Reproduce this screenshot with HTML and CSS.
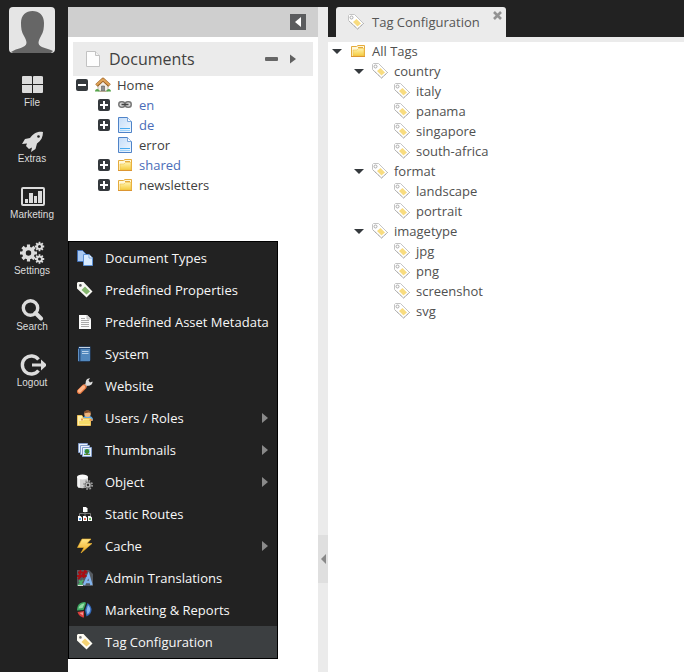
FILE: index.html
```html
<!DOCTYPE html>
<html lang="en">
<head>
<meta charset="utf-8">
<title>Tag Configuration</title>
<link rel="stylesheet" href="styles.css">
</head>
<body>
<svg class="sprite" aria-hidden="true">
  <defs>
    <linearGradient id="blue-page" x1="0" y1="0" x2="1" y2="1"><stop offset="0" stop-color="#c3dcf8"/><stop offset="1" stop-color="#f2f9ff"/></linearGradient>
    <linearGradient id="gold" x1="0" y1="0" x2="0" y2="1"><stop offset="0" stop-color="#fff3ae"/><stop offset="1" stop-color="#f5cb3e"/></linearGradient>
    <linearGradient id="bolt-fill" x1="0" y1="0" x2="0" y2="1"><stop offset="0" stop-color="#ffe68a"/><stop offset="1" stop-color="#f0a81c"/></linearGradient>
  </defs>
  <symbol id="tag" viewBox="0 0 16 16">
    <path d="M.5 1.500 1.500.500H6.500L15.500 9.500 9.500 15 .500 6.500Z" fill="#fff" stroke="#c4c4c4"/>
    <path d="M15.500 9.500 9.500 15 1 7" fill="none" stroke="#999" stroke-dasharray="1 1"/>
    <circle cx="3.500" cy="3.500" r="1.500" fill="#fff" stroke="#aaa"/>
    <path d="M8.500 5 13 9.500 9.500 12.500 5 8Z" fill="#f8dc80"/>
  </symbol>
  <symbol id="folder" viewBox="0 0 16 16">
    <path d="M1.500 13.500V3.500H6.500L8 2.500H14.500V13.500Z" fill="#fff8d8" stroke="#e5ab3c"/>
    <path d="M3 13V7H7L8.500 5.500H14V13Z" fill="url(#gold)" stroke="#efc14a" stroke-width=".6"/>
    <path d="M8 4.500H13" stroke="#e5ab3c"/>
    <path d="M1 13.500H15" stroke="#dc9632"/>
  </symbol>
  <symbol id="bluepage" viewBox="0 0 16 16">
    <path d="M1.500.500H10.500L14.500 4.500V15.500H1.500Z" fill="url(#blue-page)" stroke="#4f83c8"/>
    <path d="M10.500.500V4.500H14.500" fill="#fff" stroke="#77a6dd"/>
    <path d="M3 11.500H13" stroke="#48abf0"/><path d="M3 13.500H13" stroke="#9cd2fb"/>
  </symbol>
  <symbol id="page" viewBox="0 0 16 16">
    <path d="M1.500.500H10.500L14.500 4.500V15.500H1.500Z" fill="#fdfdfd" stroke="#c2c2c2"/>
    <path d="M10.500.500V4.500H14.500" fill="#f1f1f1" stroke="#c2c2c2"/>
  </symbol>
  <symbol id="home" viewBox="0 0 16 16">
    <path d="M3 7 8 3 13 7V14H3Z" fill="#f2eee6" stroke="#a89f90" stroke-width=".7"/>
    <path d="M6.500 14V9H9.500V14Z" fill="#8e8e8e" stroke="#5c5c5c" stroke-width=".6"/>
    <path d="M1.500 8.500 8 2.500 14.500 8.500" fill="none" stroke="#955b1f" stroke-width="3.600" stroke-linejoin="round"/>
    <path d="M1.500 8 8 2.300 14.500 8" fill="none" stroke="#dda257" stroke-width="2.200" stroke-linejoin="round"/>
    <path d="M0 14.500C0 11 4 11 5 14.500ZM11 14.500C12 11 16 11 16 14.500Z" fill="#55a34a"/>
    <path d="M5 14.500H11" stroke="#b9aa93"/>
  </symbol>
  <symbol id="link" viewBox="0 0 16 16">
    <g fill="#d8d8d8" stroke="#777" stroke-width="1.500"><rect x="1.800" y="4.700" width="6" height="5.600" rx="2.500"/><rect x="8.200" y="4.700" width="6" height="5.600" rx="2.500"/></g>
    <path d="M4.500 7.500H11.500" stroke="#444" stroke-width="1.500"/>
  </symbol>
  <symbol id="doctypes" viewBox="0 0 16 16">
    <path d="M.5.500H5.500L8.500 3.500V11.500H.5Z" fill="#a9c9f2" stroke="#416fb5"/>
    <path d="M6.500 4.500H12L15.500 8V15.500H6.500Z" fill="#d8ebff" stroke="#5c90d4"/>
    <path d="M12 4.500V8H15.500" fill="#fff" stroke="#7aa9e2"/>
  </symbol>
  <symbol id="greentag" viewBox="0 0 16 16">
    <path d="M0 1 1 0H6.500L15.500 9.500 9.500 15.500 0 6.500Z" fill="#f7f7f3"/>
    <circle cx="3.400" cy="3.400" r="1.300" fill="#555"/><path d="M8 4.500 13 9.500 9.500 12.500 4.500 8Z" fill="#84b66d"/>
  </symbol>
  <symbol id="goldtag" viewBox="0 0 16 16">
    <path d="M0 1 1 0H6.500L15.500 9.500 9.500 15.500 0 6.500Z" fill="#fffdf4"/>
    <circle cx="3.400" cy="3.400" r="1.300" fill="#777"/><path d="M8 4.500 13 9.500 9.500 12.500 4.500 8Z" fill="#f5d374"/>
  </symbol>
  <symbol id="textpage" viewBox="0 0 16 16">
    <path d="M2 1H10L14 5V15H2Z" fill="#fafafa"/><path d="M10 1V5H14" fill="#ddd" stroke="#aaa" stroke-width=".7"/>
    <path d="M4 4.500H8M4 6.500H12M4 8.500H12M4 10.500H12M4 12.500H12" stroke="#aaa"/>
  </symbol>
  <symbol id="book" viewBox="0 0 16 16">
    <path d="M1 2 2 .500H13.500V14L12.500 15.500H1Z" fill="#274f80"/><path d="M2 1.500H13" stroke="#c5d3e2"/>
    <path d="M3.500 3H13V15H3.500Z" fill="#5288bd"/><path d="M5 5.500H11.500M5 7.500H11.500" stroke="#b9d2ea"/><path d="M1.500 3V15" stroke="#5f8fc2"/>
  </symbol>
  <symbol id="wrench" viewBox="0 0 16 16">
    <path d="M6 10 10.500 5.500" stroke="#b8b8b8" stroke-width="3"/>
    <path d="M9 6C8 3 10 0 13 .300L11.500 2.500 13 4.500 15.500 3.500C16 6 13 8.500 10 7.500Z" fill="#dedede"/>
    <path d="M2.500 13.500 7 9" stroke="#e0743c" stroke-width="5" stroke-linecap="round"/><path d="M2.500 13 6.500 9" stroke="#ffb488" stroke-width="3.400" stroke-linecap="round"/>
  </symbol>
  <symbol id="users" viewBox="0 0 16 16">
    <path d="M5.500 9C5.500 4.500 15.500 4.500 16 9L15.500 11H6Z" fill="#65aee8"/><circle cx="10.500" cy="3.800" r="3.300" fill="#eeb47c"/>
    <path d="M7 3.500C7-.800 14-.800 14 3.500L12 2.500 9 3Z" fill="#87502c"/>
    <path d="M.500 15.500V5.500H5L6.500 8.500H13.500V15.500Z" fill="#fff0ac" stroke="#eec25a"/><path d="M2 14.500V11H6L7 9.500H13V14.500Z" fill="#f8dc69"/>
    <path d="M12.500 10H15.500M4 9.500H6" stroke="#e49a54" stroke-width="2"/>
  </symbol>
  <symbol id="thumbs" viewBox="0 0 16 16">
    <g fill="#e8f1fc" stroke="#839cc9"><path d="M1.500 1.500H10.500V10.500H1.500Z"/><path d="M3.500 3.500H12.500V12.500H3.500Z"/><path d="M5.500 5.500H14.500V14.500H5.500Z"/></g>
    <path d="M7 7H13V13H7Z" fill="#9bd0f6"/><path d="M7 13V12H13V13Z" fill="#4d9842"/><circle cx="10" cy="9.400" r="2.300" fill="#388c32"/><path d="M10 11V13" stroke="#6b4c23"/>
  </symbol>
  <symbol id="object" viewBox="0 0 16 16">
    <path d="M0 3V12C1 15 10 15 11 12V3Z" fill="#d1d1d1"/><path d="M2 4V13.500" stroke="#f3f3f3" stroke-width="2"/><ellipse cx="5.500" cy="3" rx="5.500" ry="2.500" fill="#fafafa"/>
    <circle cx="11" cy="11" r="4" fill="none" stroke="#999" stroke-width="2" stroke-dasharray="1.600 1.540"/><circle cx="11" cy="11" r="3" fill="#bbb" stroke="#777"/><circle cx="11" cy="11" r="1.200" fill="#333"/>
  </symbol>
  <symbol id="routes" viewBox="0 0 16 16">
    <path d="M8 5V10M2.500 10V7.500H13.500V10" fill="none" stroke="#777"/>
    <path d="M6 1H9L10.500 2.500V6H6Z" fill="#fff"/>
    <path d="M1 10H3.500L5 11.500V15H1ZM6 10H8.500L10 11.500V15H6ZM11 10H13.500L15 11.500V15H11Z" fill="#fff"/>
    <path d="M2 12H4V14H2Z" fill="#529de5"/><path d="M7 12H9V14H7Z" fill="#e16d56"/><path d="M12 12H14V14H12Z" fill="#67b659"/>
  </symbol>
  <symbol id="bolt" viewBox="0 0 16 16">
    <path d="M5 1H14L10 5.500H15L4 15 7 9.500H.500Z" fill="url(#bolt-fill)" stroke="#eeb32b" stroke-width=".6"/>
  </symbol>
  <symbol id="translate" viewBox="0 0 16 16">
    <path d="M0 0H12L16 4V16H0Z" fill="#555a60"/>
    <path d="M7 15 11.500 5 14.500 15M9 12H14" fill="none" stroke="#83b4ee" stroke-width="2.400"/>
    <path d="M1 2.500H10M0 6H9.500M3.500 0 2.500 8M8 0 6.500 8M1 9 10 1" stroke="#a80e13" stroke-width="1.800"/>
    <path d="M2 10.500 5 13M6 10 2 14.500H6" fill="none" stroke="#4cae68" stroke-width="1.800"/><path d="M1 15.500H6" stroke="#ddd"/>
  </symbol>
  <symbol id="reports" viewBox="0 0 16 16">
    <path d="M8 0C2 0 0 4 0 8.500L6.500 8 9 1Z" fill="#3ea863"/><path d="M1.500 6.500C2 3 5 1.500 7.500 1.500L5.500 6Z" fill="#94dca5"/>
    <path d="M10.500 1C16.500 5 15.500 12 9.500 14.500L8 8Z" fill="#3269ba"/><path d="M11 3C14.500 6 13.500 10 10.500 12.500L9.500 8Z" fill="#8ab9ef"/>
    <path d="M.500 10 7 9V15.500C4 15.500 1.500 13 .500 10Z" fill="#d93d3d"/><path d="M2.500 10.900 6 10.200V13.500Z" fill="#f39a91"/>
  </symbol>
  <symbol id="file-nav" viewBox="0 0 28 24"><path d="M5 3H13Q14 3 14 4V11H4V4Q4 3 5 3ZM16 3H23Q25 3 25 4V11H15V4Q15 3 16 3ZM4 12H14V20H5Q4 20 4 19ZM15 12H25V19Q25 20 24 20H15Z"/><path d="M14.500 3V20M4 11.500H25" stroke="#222"/></symbol>
  <symbol id="rocket-nav" viewBox="0 0 28 24"><path d="M25 3C19 2 15 5 12 9L7 10 4 15 9 14.500 8 17 11 20 14 18.500 13 23 17.500 20 19 14.500C23 12 25 8 25 3Z"/><circle cx="20.500" cy="7.500" r="1.300" fill="#222"/></symbol>
  <symbol id="chart-nav" viewBox="0 0 28 24"><rect x="4" y="3" width="22" height="17" rx="1" fill="none" stroke="currentColor" stroke-width="2"/><path d="M7 14H10V18H7ZM11 8H15V18H11ZM16 11H19V18H16ZM20 6H24V18H20Z"/></symbol>
  <symbol id="gears-nav" viewBox="0 0 28 24">
    <g fill="none" stroke="currentColor">
      <circle cx="10.500" cy="12" r="4.500" stroke-width="3.600"/>
      <path d="M10.500 3.500V7M10.500 17V20.500M2 12H5.500M15.500 12H19M4.500 6 7 8.500M14 15.500 16.500 18M4.500 18 7 15.500M14 8.500 16.500 6" stroke-width="3.200"/>
      <circle cx="21.500" cy="5.500" r="2.400" stroke-width="1.800"/>
      <path d="M21.500.800V3M21.500 8V10.200M16.800 5.500H19M24 5.500H26.200M18.200 2.200 19.700 3.700M23.300 7.300 24.800 8.800M18.200 8.800 19.700 7.300M23.300 3.700 24.800 2.200" stroke-width="1.800"/>
      <circle cx="21.500" cy="18" r="2.400" stroke-width="1.800"/>
      <path d="M21.500 13.300V15.500M21.500 20.500V22.700M16.800 18H19M24 18H26.200M18.200 14.700 19.700 16.200M23.300 19.800 24.800 21.300M18.200 21.300 19.700 19.800M23.300 16.200 24.800 14.700" stroke-width="1.800"/>
    </g>
  </symbol>
  <symbol id="search-nav" viewBox="0 0 28 24"><circle cx="12.500" cy="11" r="7.200" fill="none" stroke="currentColor" stroke-width="3.400"/><path d="M17.500 16 23 21.500" stroke="currentColor" stroke-width="4" stroke-linecap="round"/></symbol>
  <symbol id="logout-nav" viewBox="0 0 28 24"><path d="M20.500 6.500A9 9 0 1 0 20.500 17.500" fill="none" stroke="currentColor" stroke-width="3.400"/><path d="M14 10.500H23V6.500L29 12 23 17.500V13.500H14Z"/></symbol>
</svg>

<div class="app">
  <nav class="sidebar" aria-label="Main">
    <svg class="avatar" viewBox="0 0 46 46"><rect width="46" height="46" rx="4" fill="#e5e5e5"/><path d="M2 45C8 41 17 41 17.500 36C17.500 33 16 31 15 29C12.500 25 12 21 12 16C12 8 17 4 23.500 4C30 4 35 8 35 16C35 21 34.500 25 32 29C31 31 29.500 33 29.500 36C30 41 39 41 44 44L42 46H4Z" fill="#666"/></svg>
    <button class="nav-item"><svg><use href="#file-nav"/></svg><span>File</span></button>
    <button class="nav-item"><svg><use href="#rocket-nav"/></svg><span>Extras</span></button>
    <button class="nav-item"><svg><use href="#chart-nav"/></svg><span>Marketing</span></button>
    <button class="nav-item"><svg><use href="#gears-nav"/></svg><span>Settings</span></button>
    <button class="nav-item"><svg><use href="#search-nav"/></svg><span>Search</span></button>
    <button class="nav-item"><svg><use href="#logout-nav"/></svg><span>Logout</span></button>
  </nav>

  <aside class="documents">
    <div class="collapse-bar"><button class="collapse" aria-label="Collapse"><svg viewBox="0 0 16 16"><path d="M11 3V13L5 8Z" fill="#fff"/></svg></button></div>
    <div class="docs-body">
      <header class="docs-head">
        <svg class="icon"><use href="#page"/></svg>
        <h2>Documents</h2>
        <button class="tool" aria-label="Minimize"><svg viewBox="0 0 16 16"><rect x="2" y="6" width="13" height="4" rx="1" fill="#666"/></svg></button>
        <button class="tool" aria-label="Move right"><svg viewBox="0 0 16 16"><path d="M5 3.500V12.500L11 8Z" fill="#606060"/></svg></button>
      </header>
      <ul class="tree docs-tree">
        <li><div class="row"><button class="toggle minus" aria-label="Collapse Home"></button><svg class="icon"><use href="#home"/></svg><span>Home</span></div>
          <ul>
            <li><div class="row blue"><button class="toggle plus" aria-label="Expand en"></button><svg class="icon"><use href="#link"/></svg><span>en</span></div></li>
            <li><div class="row blue"><button class="toggle plus" aria-label="Expand de"></button><svg class="icon"><use href="#bluepage"/></svg><span>de</span></div></li>
            <li><div class="row"><i class="spacer"></i><svg class="icon"><use href="#bluepage"/></svg><span>error</span></div></li>
            <li><div class="row blue"><button class="toggle plus" aria-label="Expand shared"></button><svg class="icon"><use href="#folder"/></svg><span>shared</span></div></li>
            <li><div class="row"><button class="toggle plus" aria-label="Expand newsletters"></button><svg class="icon"><use href="#folder"/></svg><span>newsletters</span></div></li>
          </ul>
        </li>
      </ul>
    </div>
  </aside>

  <div class="splitter"><button aria-label="Collapse panel"><svg viewBox="0 0 10 10"><path d="M8 0V10L3 5Z" fill="#888"/></svg></button></div>

  <main class="content">
    <div class="tabs">
      <div class="tab"><svg class="icon"><use href="#tag"/></svg><span>Tag Configuration</span><button class="close" aria-label="Close tab"><svg viewBox="0 0 9 9"><path d="M1 1 8 8M8 1 1 8" stroke="#929292" stroke-width="2.600"/></svg></button></div>
    </div>
    <ul class="tree tag-tree">
      <li><div class="row"><button class="caret" aria-label="Collapse All Tags"></button><svg class="icon"><use href="#folder"/></svg><span>All Tags</span></div>
        <ul>
          <li><div class="row"><button class="caret" aria-label="Collapse country"></button><svg class="icon"><use href="#tag"/></svg><span>country</span></div>
            <ul>
              <li><div class="row"><i class="spacer"></i><svg class="icon"><use href="#tag"/></svg><span>italy</span></div></li>
              <li><div class="row"><i class="spacer"></i><svg class="icon"><use href="#tag"/></svg><span>panama</span></div></li>
              <li><div class="row"><i class="spacer"></i><svg class="icon"><use href="#tag"/></svg><span>singapore</span></div></li>
              <li><div class="row"><i class="spacer"></i><svg class="icon"><use href="#tag"/></svg><span>south-africa</span></div></li>
            </ul>
          </li>
          <li><div class="row"><button class="caret" aria-label="Collapse format"></button><svg class="icon"><use href="#tag"/></svg><span>format</span></div>
            <ul>
              <li><div class="row"><i class="spacer"></i><svg class="icon"><use href="#tag"/></svg><span>landscape</span></div></li>
              <li><div class="row"><i class="spacer"></i><svg class="icon"><use href="#tag"/></svg><span>portrait</span></div></li>
            </ul>
          </li>
          <li><div class="row"><button class="caret" aria-label="Collapse imagetype"></button><svg class="icon"><use href="#tag"/></svg><span>imagetype</span></div>
            <ul>
              <li><div class="row"><i class="spacer"></i><svg class="icon"><use href="#tag"/></svg><span>jpg</span></div></li>
              <li><div class="row"><i class="spacer"></i><svg class="icon"><use href="#tag"/></svg><span>png</span></div></li>
              <li><div class="row"><i class="spacer"></i><svg class="icon"><use href="#tag"/></svg><span>screenshot</span></div></li>
              <li><div class="row"><i class="spacer"></i><svg class="icon"><use href="#tag"/></svg><span>svg</span></div></li>
            </ul>
          </li>
        </ul>
      </li>
    </ul>
  </main>

  <div class="menu" role="menu" aria-label="Settings">
    <button role="menuitem"><svg class="icon"><use href="#doctypes"/></svg><span>Document Types</span></button>
    <button role="menuitem"><svg class="icon"><use href="#greentag"/></svg><span>Predefined Properties</span></button>
    <button role="menuitem"><svg class="icon"><use href="#textpage"/></svg><span>Predefined Asset Metadata</span></button>
    <button role="menuitem"><svg class="icon"><use href="#book"/></svg><span>System</span></button>
    <button role="menuitem"><svg class="icon"><use href="#wrench"/></svg><span>Website</span></button>
    <button role="menuitem" class="has-sub"><svg class="icon"><use href="#users"/></svg><span>Users / Roles</span></button>
    <button role="menuitem" class="has-sub"><svg class="icon"><use href="#thumbs"/></svg><span>Thumbnails</span></button>
    <button role="menuitem" class="has-sub"><svg class="icon"><use href="#object"/></svg><span>Object</span></button>
    <button role="menuitem"><svg class="icon"><use href="#routes"/></svg><span>Static Routes</span></button>
    <button role="menuitem" class="has-sub"><svg class="icon"><use href="#bolt"/></svg><span>Cache</span></button>
    <button role="menuitem"><svg class="icon"><use href="#translate"/></svg><span>Admin Translations</span></button>
    <button role="menuitem"><svg class="icon"><use href="#reports"/></svg><span>Marketing &amp; Reports</span></button>
    <button role="menuitem" class="active"><svg class="icon"><use href="#goldtag"/></svg><span>Tag Configuration</span></button>
  </div>
</div>
</body>
</html>
```
FILE: styles.css
```css
* { box-sizing: border-box; }
body {
  margin: 0;
  background: #222;
  color: #404040;
  font: 13px/20px "Open Sans", sans-serif;
}
button {
  margin: 0;
  padding: 0;
  border: 0;
  background: none;
  color: inherit;
  font: inherit;
}
ul { margin: 0; padding: 0; list-style: none; }
svg { display: block; flex: none; }
.sprite { position: absolute; width: 0; height: 0; }
.icon { width: 16px; height: 16px; }

.app {
  position: relative;
  display: grid;
  grid-template-columns: 68px 250px 10px 1fr;
  min-height: 100vh;
}

/* Sidebar */
.sidebar {
  display: flex;
  flex-direction: column;
  align-items: center;
  padding: 7px 4px 0 0;
}
.avatar { width: 46px; height: 46px; margin-bottom: 20px; }
.nav-item {
  display: flex;
  flex-direction: column;
  align-items: center;
  width: 64px;
  height: 56px;
  color: #dcdcdc;
  font: 10px/12px "Liberation Sans", sans-serif;
}
.nav-item svg { width: 28px; height: 24px; fill: currentColor; overflow: visible; }

/* Documents panel */
.documents { margin-top: 7px; background: #fff; }
.collapse-bar {
  display: flex;
  align-items: center;
  justify-content: flex-end;
  height: 30px;
  padding-right: 12px;
  background: #cfcfcf;
}
.collapse { width: 16px; height: 16px; background: #5b5c5e; }
.docs-body { padding: 5px; }
.docs-head {
  display: flex;
  align-items: center;
  height: 34px;
  padding: 0 12px;
  background: #ebebeb;
}
.docs-head h2 {
  flex: 1;
  margin: 0 0 0 8px;
  font-size: 16px;
  font-weight: 400;
}
.tool { width: 16px; height: 16px; margin-left: 6px; }

/* Trees */
.tree { margin-top: -1px; padding-left: 3px; }
.tree ul { padding-left: 22px; }
.row { display: flex; align-items: center; height: 20px; }
.row .icon { margin-right: 6px; }
.blue { color: #4a6cb8; }
.toggle, .caret, .spacer { flex: none; width: 12px; height: 12px; margin-right: 7px; }
.toggle {
  border-radius: 2px;
  background-color: #35393d;
  background-image: linear-gradient(#fff, #fff), linear-gradient(#fff, #fff);
  background-position: center;
  background-repeat: no-repeat;
}
.toggle.plus { background-size: 8px 2px, 2px 8px; }
.toggle.minus { background-size: 8px 2px, 0 0; }
.caret::before {
  content: "";
  display: block;
  width: 0;
  margin-left: 1px;
  border: 5px solid transparent;
  border-top-color: #35393d;
  border-bottom: 0;
}

/* Splitter */
.splitter {
  display: flex;
  align-items: flex-start;
  margin-top: 7px;
  padding-top: calc(100vh - 144px);
  background: #ebebeb;
}
.splitter button { width: 10px; height: 48px; background: #dfdfdf; }
.splitter svg { width: 10px; height: 10px; }

/* Content */
.content { min-width: 0; background: #fff; }
.tabs {
  display: flex;
  align-items: flex-end;
  height: 42px;
  padding-left: 8px;
  border-bottom: 5px solid #ebebeb;
  background: #222;
}
.tab {
  position: relative;
  display: flex;
  align-items: center;
  gap: 8px;
  height: 30px;
  padding: 0 26px 0 12px;
  border-radius: 3px 3px 0 0;
  background: #ebebeb;
  color: #555;
}
.close { position: absolute; top: 4px; right: 4px; }
.close svg { width: 9px; height: 9px; }
.content .row { color: #505050; }

/* Settings menu */
.menu {
  position: absolute;
  top: 241px;
  left: 68px;
  width: 210px;
  border: 1px solid #000;
  background: #222;
  color: #f8f8f8;
}
.menu button {
  display: flex;
  align-items: center;
  width: 100%;
  height: 32px;
  padding: 0 9px 0 8px;
  text-align: left;
  white-space: nowrap;
}
.menu .icon { margin-right: 12px; }
.menu .active { background: #3c3f41; }
.menu .has-sub::after {
  content: "";
  margin-left: auto;
  border: 5px solid transparent;
  border-left: 6px solid #8a8a8a;
  border-right: 0;
}
```
